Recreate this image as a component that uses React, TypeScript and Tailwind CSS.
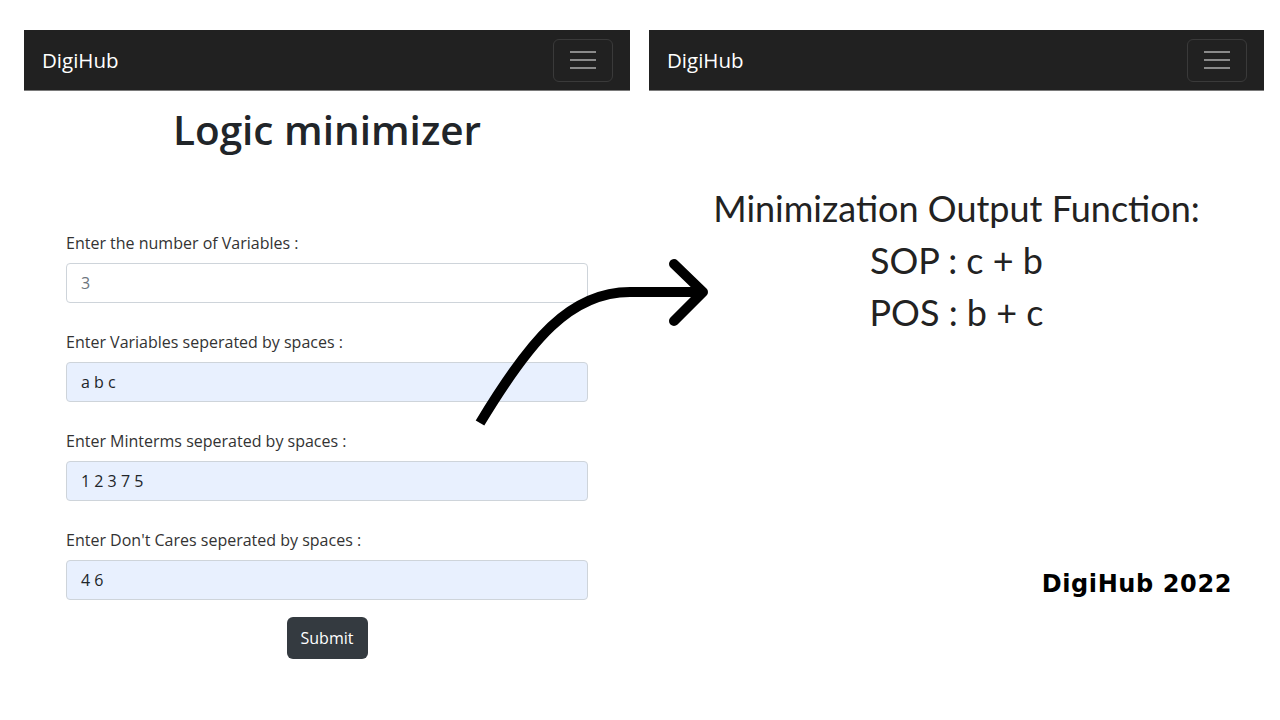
function NavBar() {
  return (
    <nav className="h-[61px] bg-[#212121] flex items-center justify-between pl-[18px] pr-[17px] border-b border-[#7a7a7a]">
      <span className="text-white text-[20.5px] font-['Open_Sans',sans-serif]">DigiHub</span>
      <button className="w-[60px] h-[43px] rounded-md border border-[#3a3a3a] flex flex-col items-center justify-center gap-[6px]">
        <span className="block w-[26px] h-[2px] bg-[#8a8a8a]" />
        <span className="block w-[26px] h-[2px] bg-[#8a8a8a]" />
        <span className="block w-[26px] h-[2px] bg-[#8a8a8a]" />
      </button>
    </nav>
  );
}

const fields = [
  { label: 'Enter the number of Variables :', value: '3', filled: false },
  { label: 'Enter Variables seperated by spaces :', value: 'a b c', filled: true },
  { label: 'Enter Minterms seperated by spaces :', value: '1 2 3 7 5', filled: true },
  { label: "Enter Don't Cares seperated by spaces :", value: '4 6', filled: true },
];

export default function App() {
  return (
    <div className="relative w-[1280px] h-[720px] bg-white overflow-hidden flex gap-[19px] pl-6 pt-[30px] font-['Open_Sans',sans-serif]">
      {/* left screenshot: form */}
      <section className="w-[606px]">
        <NavBar />
        <h1 className="text-center text-[40.5px] leading-[48px] font-semibold text-[#212529] mt-[15px]">Logic minimizer</h1>

        <form className="px-[42px] mt-[77px] flex flex-col">
          {fields.map((f, i) => (
            <div key={i} className="mb-[27px]">
              <label className="block text-[16px] leading-6 text-[#333] mb-2">{f.label}</label>
              <div
                className={`h-10 rounded border border-[#ced4da] px-[14px] flex items-center text-[16px] ${
                  f.filled ? 'bg-[#e8f0fe] text-[#212529]' : 'bg-white text-[#6c757d]'
                }`}
              >
                {f.value}
              </div>
            </div>
          ))}
          <button
            type="button"
            className="-mt-[10px] self-center w-[81px] h-[42px] rounded-md bg-[#343a40] text-white text-[16px]"
          >
            Submit
          </button>
        </form>
      </section>

      {/* right screenshot: result */}
      <section className="w-[615px] flex flex-col">
        <NavBar />
        <div className="mt-[91px] flex flex-col items-center text-[#222] font-['Lato',sans-serif] text-[36px] leading-[52px]">
          <div>Minimization Output Function:</div>
          <div>SOP : c + b</div>
          <div>POS : b + c</div>
        </div>
        <div className="mt-auto mb-[118px] pr-[32px] text-right text-[24px] tracking-[0.6px] font-bold text-black font-['DejaVu_Sans',sans-serif]">
          DigiHub 2022
        </div>
      </section>

      {/* curved arrow overlay */}
      <svg className="absolute inset-0 pointer-events-none" width="1280" height="720" viewBox="0 0 1280 720">
        <path d="M480 423 C 530 340, 570 292, 630 292 L 702 292" fill="none" stroke="#000" strokeWidth="10" />
        <path d="M674 264 L 703 292 L 674 321" fill="none" stroke="#000" strokeWidth="10" strokeLinecap="round" strokeLinejoin="round" />
      </svg>
    </div>
  );
}
